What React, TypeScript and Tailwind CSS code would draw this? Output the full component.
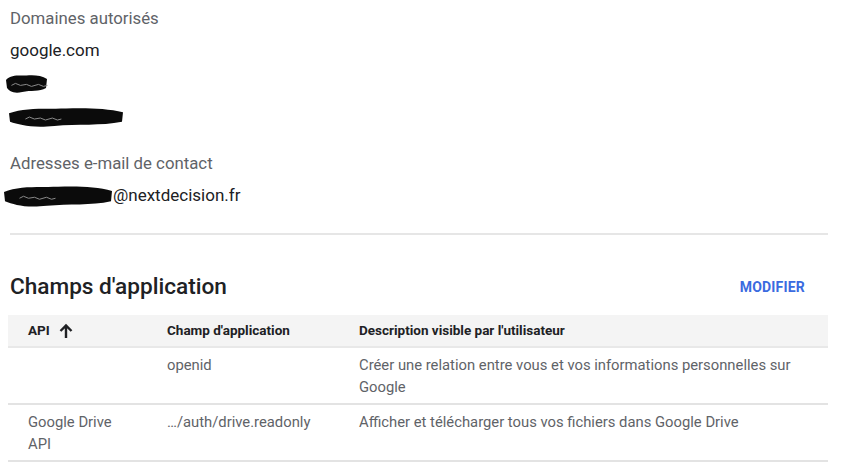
import React from "react";

function Scribble({ width, height }: { width: number; height: number }) {
  // hand-drawn redaction blob
  const w = width;
  const h = height;
  return (
    <svg width={w} height={h} viewBox={`0 0 ${w} ${h}`} className="block">
      <path
        d={`M1 ${h * 0.35} C ${w * 0.15} ${h * 0.05}, ${w * 0.35} ${h * 0.15}, ${w * 0.5} ${h * 0.12} S ${w * 0.85} ${h * 0.1}, ${w - 1} ${h * 0.3} L ${w - 2} ${h * 0.75} C ${w * 0.8} ${h * 0.95}, ${w * 0.6} ${h * 0.85}, ${w * 0.4} ${h * 0.95} S ${w * 0.1} ${h * 0.9}, 2 ${h * 0.75} Z`}
        fill="#0b0b0b"
      />
      <path
        d={`M${w * 0.15} ${h * 0.62} l4 -2 l5 2 l6 -1 l5 2 l7 -2 l5 2 l4 -1`}
        stroke="#8a8a8a"
        strokeWidth="1"
        fill="none"
      />
    </svg>
  );
}

function Row({
  api,
  scope,
  desc,
}: {
  api: React.ReactNode;
  scope: string;
  desc: string;
}) {
  return (
    <div className="flex border-b-[2px] border-[#e3e3e3] text-[14.8px] leading-[22px] text-[#5f6368]">
      <div className="w-[159px] shrink-0 pl-[20px] pr-[46px] pt-[6px] pb-[5px]">{api}</div>
      <div className="w-[192px] shrink-0 pt-[6px] pb-[5px]">{scope}</div>
      <div className="flex-1 pr-[26px] pt-[6px] pb-[5px]">{desc}</div>
    </div>
  );
}

export default function App() {
  return (
    <div className="h-[469px] w-[848px] overflow-hidden bg-white font-['Roboto',sans-serif]">
      <div className="pl-[10px] pr-[20px] pt-[6px]">
        <div className="text-[16.8px] leading-[24px] text-[#5f6368]">Domaines autorisés</div>
        <div className="mt-[8px] text-[17px] leading-[24px] text-[#202124]">google.com</div>
        <div className="mt-[11px] -ml-[5px] h-[20px]">
          <Scribble width={43} height={20} />
        </div>
        <div className="mt-[13px] -ml-[2px] h-[20px]">
          <Scribble width={116} height={21} />
        </div>
        <div className="mt-[25px] text-[16.8px] leading-[24px] text-[#5f6368]">
          Adresses e-mail de contact
        </div>
        <div className="mt-[8px] -ml-[7px] flex items-center text-[17px] leading-[24px] text-[#202124]">
          <Scribble width={110} height={23} />
          <span>@nextdecision.fr</span>
        </div>
        <div className="mt-[26px] h-[2px] bg-[#e6e6e6]" />
      </div>

      <div className="flex items-center justify-between pl-[10px] pr-[43px] pt-[38px]">
        <h2 className="text-[22.6px] font-medium leading-[28px] text-[#202124]">Champs d'application</h2>
        <button className="text-[14px] font-bold tracking-[0.2px] text-[#3b6be0]">MODIFIER</button>
      </div>

      <div className="ml-[8px] mr-[20px] mt-[14px]">
        <div className="flex h-[33px] items-center border-b-[2px] border-[#e8e8e8] bg-[#f4f4f4] text-[13.5px] font-bold text-[#202124]">
          <div className="flex w-[159px] shrink-0 items-center gap-[9px] pl-[20px]">
            API
            <svg width="14" height="16" viewBox="0 0 14 16">
              <path d="M7 15V3M1.5 8L7 2.5 12.5 8" stroke="#202124" strokeWidth="2.4" fill="none" />
            </svg>
          </div>
          <div className="w-[192px] shrink-0">Champ d'application</div>
          <div className="flex-1">Description visible par l'utilisateur</div>
        </div>
        <Row
          api=""
          scope="openid"
          desc="Créer une relation entre vous et vos informations personnelles sur Google"
        />
        <Row
          api="Google Drive API"
          scope="…/auth/drive.readonly"
          desc="Afficher et télécharger tous vos fichiers dans Google Drive"
        />
      </div>
    </div>
  );
}
